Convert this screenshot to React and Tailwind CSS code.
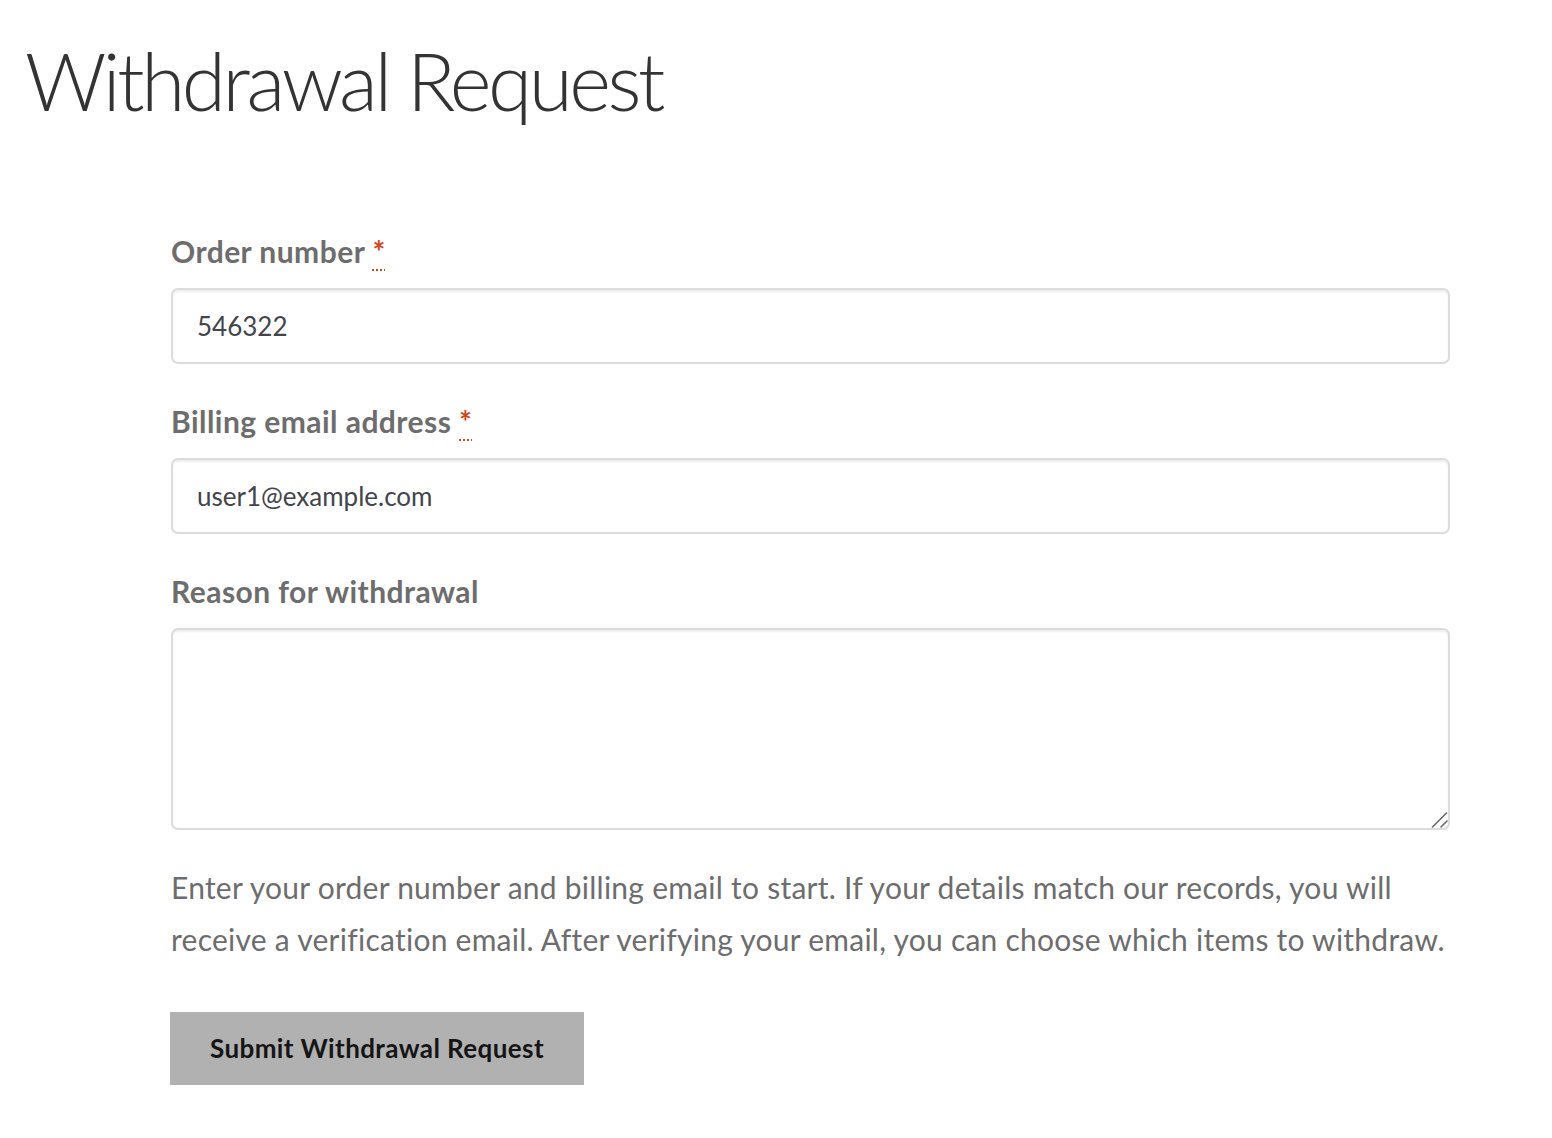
import React from "react";

const font = { fontFamily: "Lato, 'Noto Sans', sans-serif" };

function Label({ children, required }) {
  return (
    <label className="block h-[36px] text-[30px] leading-[36px] tracking-[0.45px] font-bold text-[#6d6d6d] mb-[19px]">
      {children}
      {required && (
        <>
          {" "}
          <abbr title="required" className="text-[#d0451b] underline decoration-dotted decoration-[#d0451b] decoration-2 underline-offset-[6px]">
            *
          </abbr>
        </>
      )}
    </label>
  );
}

const fieldCls =
  "block w-full rounded-[7px] border-2 border-[#dcdcde] bg-white px-[24px] text-[26px] text-[#43454b] shadow-[inset_0_2px_2px_rgba(0,0,0,0.07)] outline-none";

export default function App() {
  return (
    <div className="min-h-screen bg-white" style={font}>
      <h1 className="pt-[40px] pl-[25px] text-[80px] leading-[80px] tracking-[-3.4px] font-light text-[#333333]">
        Withdrawal Request
      </h1>
      <form className="ml-[171px] w-[1279px] pt-[113px]" onSubmit={(e) => e.preventDefault()}>
        <Label required>Order number</Label>
        <input readOnly value="546322" className={`${fieldCls} h-[76px]`} />
        <div className="h-[39px]" />
        <Label required>Billing email address</Label>
        <input readOnly value="user1@example.com" className={`${fieldCls} h-[76px]`} />
        <div className="h-[39px]" />
        <Label>Reason for withdrawal</Label>
        <div className="relative">
          <textarea readOnly className={`${fieldCls} h-[202px] py-[16px] resize-none`} />
          <svg
            className="absolute right-[2px] bottom-[2px] pointer-events-none"
            width="17"
            height="17"
            viewBox="0 0 17 17"
          >
            <line x1="1.5" y1="16" x2="15.5" y2="2" stroke="#6b6b6b" strokeWidth="1.6" strokeLinecap="round" />
            <line x1="10" y1="16" x2="16" y2="10" stroke="#6b6b6b" strokeWidth="1.6" strokeLinecap="round" />
          </svg>
        </div>
        <p className="mt-[31px] whitespace-nowrap text-[30px] leading-[52px] tracking-[0.25px] text-[#6d6d6d]">
          Enter your order number and billing email to start. If your details match our records, you will
          <br />
          receive a verification email. After verifying your email, you can choose which items to withdraw.
        </p>
        <button
          type="submit"
          className="mt-[47px] -ml-[1px] h-[73px] w-[414px] bg-[#b1b1b1] text-[26px] tracking-[0.4px] font-bold text-[#151515]"
        >
          Submit Withdrawal Request
        </button>
      </form>
    </div>
  );
}
